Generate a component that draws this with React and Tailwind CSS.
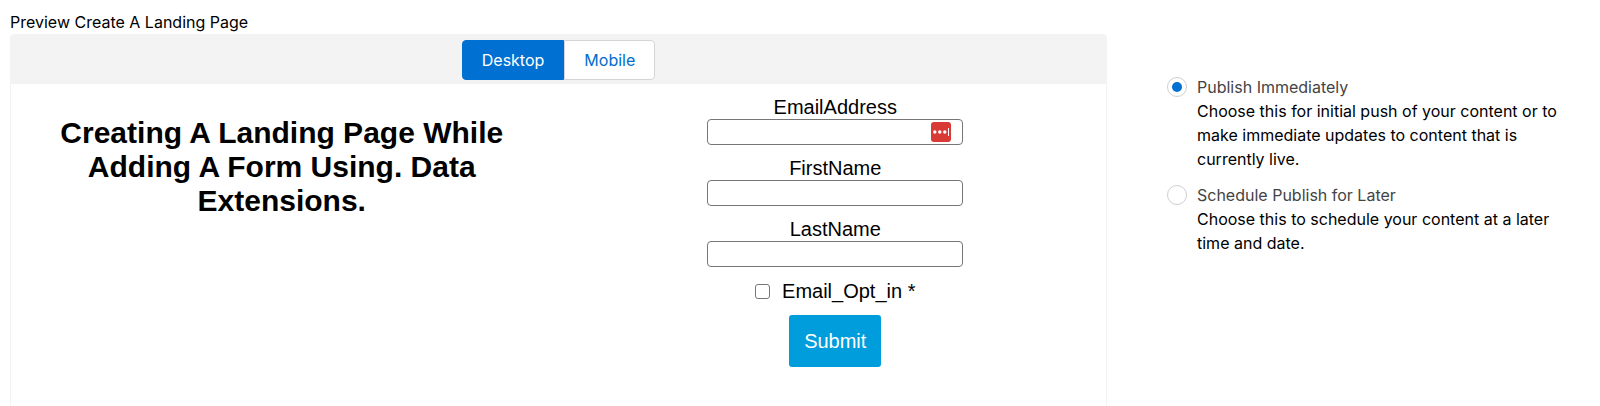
import { useState } from "react";

const FIELDS = [
  { id: "email-address", label: "EmailAddress", badge: true },
  { id: "first-name", label: "FirstName" },
  { id: "last-name", label: "LastName" },
];

const OPTIONS = [
  {
    id: "now",
    label: "Publish Immediately",
    text: "Choose this for initial push of your content or to make immediate updates to content that is currently live.",
  },
  {
    id: "later",
    label: "Schedule Publish for Later",
    text: "Choose this to schedule your content at a later time and date.",
  },
];

function AutofillBadge() {
  return (
    <svg
      aria-hidden="true"
      viewBox="0 0 20 20"
      className="pointer-events-none absolute top-[3px] right-3 size-5"
    >
      <rect width="20" height="20" rx="3" fill="#d93a36" />
      <circle cx="3.8" cy="10" r="1.7" fill="#fff" />
      <circle cx="8.8" cy="10" r="1.7" fill="#fff" />
      <circle cx="13.8" cy="10" r="1.7" fill="#fff" />
      <rect x="17" y="6" width="1" height="8" fill="#fff" />
    </svg>
  );
}

function ViewTabs({ view, onChange }) {
  const active = "border-[#0070d2] bg-[#0070d2] text-white";
  const idle = "border-[#d4d4d4] bg-white text-[#006dcc]";
  return (
    <div className="flex">
      <button
        type="button"
        onClick={() => onChange("desktop")}
        className={`h-10 rounded-l border px-[19px] ${view === "desktop" ? active : idle}`}
      >
        Desktop
      </button>
      <button
        type="button"
        onClick={() => onChange("mobile")}
        className={`h-10 rounded-r border px-[19px] ${view === "mobile" ? active : idle}`}
      >
        Mobile
      </button>
    </div>
  );
}

function SignupForm() {
  return (
    <form
      onSubmit={(e) => e.preventDefault()}
      className="flex flex-col items-center pt-[11px] text-xl leading-6"
    >
      <div className="flex flex-col gap-[11px]">
        {FIELDS.map((f) => (
          <div key={f.id} className="flex flex-col items-center">
            <label htmlFor={f.id}>{f.label}</label>
            <div className="relative">
              <input
                id={f.id}
                type="text"
                className="block h-[26px] w-64 rounded-sm border border-[#767676] bg-white px-2 text-base"
              />
              {f.badge && <AutofillBadge />}
            </div>
          </div>
        ))}
      </div>
      <label className="mt-3 flex items-center gap-3">
        <input
          type="checkbox"
          className="size-[15px] appearance-none rounded-[3px] border border-[#767676] bg-white checked:bg-[#0070d2]"
        />
        Email_Opt_in *
      </label>
      <button
        type="submit"
        className="mt-3 rounded-[3px] bg-[#009ddc] px-[15px] py-[14px] text-white"
      >
        Submit
      </button>
    </form>
  );
}

export default function App() {
  const [view, setView] = useState("desktop");
  const [publish, setPublish] = useState("now");

  return (
    <main className="grid min-h-screen grid-cols-[1097fr_493fr] bg-white pl-[10px] font-['Inter',sans-serif] text-base text-black">
      <section className="flex flex-col pt-[10px]">
        <h1 className="leading-6">Preview Create A Landing Page</h1>
        <div className="flex flex-1 flex-col rounded-t border-x border-[#f3f3f3]">
          <div className="flex justify-center rounded-t bg-[#f3f3f3] pt-[6px] pb-1">
            <ViewTabs view={view} onChange={setView} />
          </div>
          <div className="grid grid-cols-2 gap-3 font-['Liberation_Sans',sans-serif]">
            <h2 className="px-10 pt-8 text-center text-[30px] leading-[34px] font-bold">
              Creating A Landing Page While Adding A Form Using. Data Extensions.
            </h2>
            <SignupForm />
          </div>
        </div>
      </section>
      <fieldset className="flex min-w-0 flex-col gap-3 pt-[75px] pr-10 pl-[60px]">
        {OPTIONS.map((o) => (
          <div key={o.id} className="flex items-start gap-[10px]">
            <input
              id={o.id}
              type="radio"
              name="publish"
              checked={publish === o.id}
              onChange={() => setPublish(o.id)}
              aria-describedby={`${o.id}-text`}
              className="my-[2px] grid size-5 shrink-0 appearance-none place-items-center rounded-full border border-[#cfcfcf] bg-white before:size-[10px] before:rounded-full checked:before:bg-[#0070d2]"
            />
            <div>
              <label htmlFor={o.id} className="block leading-6 text-[#444]">
                {o.label}
              </label>
              <p id={`${o.id}-text`} className="leading-6">
                {o.text}
              </p>
            </div>
          </div>
        ))}
      </fieldset>
    </main>
  );
}
